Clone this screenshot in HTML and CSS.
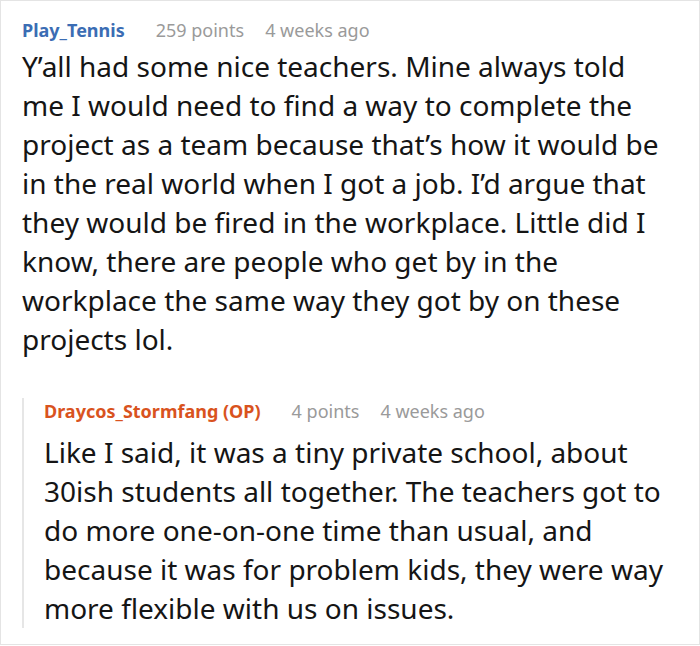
FILE: index.html
```html
<!DOCTYPE html>
<html>
<head>
<meta charset="utf-8">
<link rel="stylesheet" href="styles.css">
</head>
<body>
<div class="frame">
  <div class="comment">
    <div class="meta">
      <span class="name name-blue">Play_Tennis</span>
      <span class="info">259 points</span>
      <span class="info">4 weeks ago</span>
    </div>
    <p class="text">Y’all had some nice teachers. Mine always told me I would need to find a way to complete the project as a team because that’s how it would be in the real world when I got a job. I’d argue that they would be fired in the workplace. Little did I know, there are people who get by in the workplace the same way they got by on these projects lol.</p>
    <div class="reply">
      <div class="meta">
        <span class="name name-orange">Draycos_Stormfang (OP)</span>
        <span class="info">4 points</span>
        <span class="info">4 weeks ago</span>
      </div>
      <p class="text">Like I said, it was a tiny private school, about 30ish students all together. The teachers got to do more one-on-one time than usual, and because it was for problem kids, they were way more flexible with us on issues.</p>
    </div>
  </div>
</div>
</body>
</html>
```
FILE: styles.css
```css
html, body {
  margin: 0;
  padding: 0;
  background: #fff;
}
.frame {
  width: 700px;
  height: 645px;
  box-sizing: border-box;
  border: 1px solid #e4e4e4;
  overflow: hidden;
  font-family: "Noto Sans", sans-serif;
}
.comment {
  padding: 16px 36px 0 21px;
}
.meta {
  display: flex;
  align-items: baseline;
  gap: 21px;
  font-size: 18px;
  line-height: 26px;
}
.name {
  font-weight: 700;
  margin-right: 10px;
}
.name-blue { color: #3b6db4; }
.name-orange { color: #d9531e; }
.info { color: #9a9a9a; }
.text {
  margin: 0;
  font-size: 28px;
  line-height: 39px;
  color: #151515;
}
.comment > .text {
  margin-top: 4px;
}
.reply {
  margin-top: 39px;
  border-left: 2px solid #e6e6e6;
  padding-left: 20px;
}
.reply .text {
  margin-top: 9px;
}
```
